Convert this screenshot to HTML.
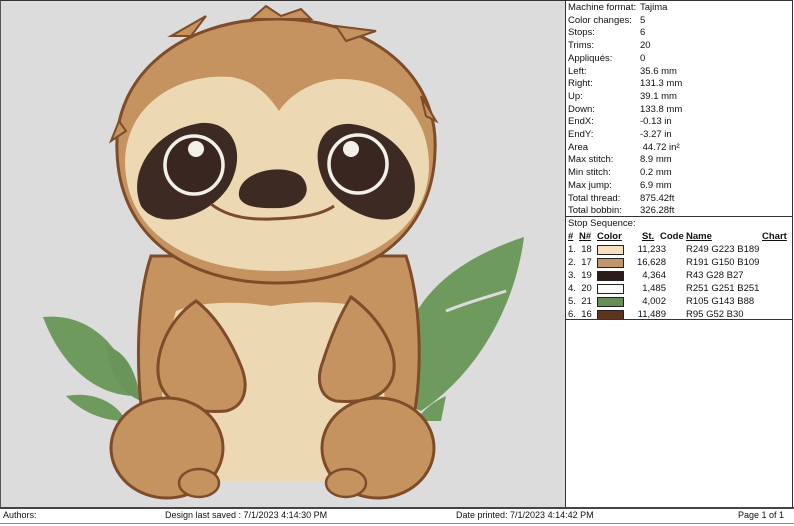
<!DOCTYPE html>
<html><head><style>
body{margin:0;width:794px;height:526px;background:#fff;position:relative;overflow:hidden;font-family:"Liberation Sans",sans-serif;font-size:9.5px;color:#111}
#cv{position:absolute;left:0;top:0;width:564px;height:506px;background:#dcdcdc;border-top:1px solid #333;border-left:1px solid #555}
#pn{position:absolute;left:565px;top:0;width:226px;height:507px;border:1px solid #333;background:#fff}
.r{position:absolute;left:2px;height:13px;line-height:13px;white-space:nowrap}
.r b{font-weight:normal;position:absolute;left:72px}
#sep{position:absolute;left:0;top:215px;width:226px;border-top:1px solid #333}
#sep2{position:absolute;left:0;top:318px;width:226px;border-top:1px solid #333}
.t{position:absolute;height:13px;line-height:13px;white-space:nowrap}
.sw{position:absolute;left:29px;width:25px;height:8px;border:1px solid #222;top:2px}
#bar{position:absolute;left:0;top:507px;width:794px;height:14px;border-top:2px solid #444;border-bottom:1px solid #888;line-height:13px;font-size:9px}
#bar span{position:absolute;top:0}
</style></head><body>
<div id="cv">
<svg width="564" height="506" viewBox="0 0 564 506">
<path d="M398 400 C392 330 420 270 523 236 C515 300 480 370 420 410 Z" fill="#6f9a5e"/>
<path d="M445 310 C470 300 490 295 505 290" stroke="#dcdcdc" stroke-width="3" fill="none"/>
<path d="M415 420 C425 405 435 400 445 395 L440 420Z" fill="#6f9a5e"/>
<path d="M42 316 C85 312 120 340 135 395 C95 395 60 365 42 316 Z" fill="#6f9a5e"/>
<path d="M105 345 C125 350 135 370 140 400 C120 392 108 372 105 345Z" fill="#6a955a"/>
<path d="M65 395 C90 390 115 400 125 420 C100 420 80 410 65 395Z" fill="#6f9a5e"/>
<path d="M150 255 C135 300 135 370 142 420 L412 420 C422 370 420 300 405 255 Z" fill="#c4935f" stroke="#7f4c2a" stroke-width="3"/>
<path d="M175 310 C200 300 240 300 270 305 C300 300 330 300 360 305 C385 360 390 420 380 480 L170 480 C155 420 160 360 175 310Z" fill="#ecd8b3"/>
<path d="M195 300 C165 320 150 360 160 385 C170 408 200 412 225 410 C245 405 248 385 240 365 C230 340 215 315 195 300Z" fill="#c4935f" stroke="#7f4c2a" stroke-width="3"/>
<path d="M350 296 C380 318 398 350 392 375 C385 398 360 402 335 400 C318 396 315 378 322 360 C330 335 340 312 350 296Z" fill="#c4935f" stroke="#7f4c2a" stroke-width="3"/>
<ellipse cx="166" cy="447" rx="56" ry="50" fill="#c4935f" stroke="#7f4c2a" stroke-width="3"/>
<ellipse cx="377" cy="447" rx="56" ry="50" fill="#c4935f" stroke="#7f4c2a" stroke-width="3"/>
<ellipse cx="198" cy="482" rx="20" ry="14" fill="#c4935f" stroke="#7f4c2a" stroke-width="2.5"/>
<ellipse cx="345" cy="482" rx="20" ry="14" fill="#c4935f" stroke="#7f4c2a" stroke-width="2.5"/>
<path d="M116 150 C112 75 180 18 275 18 C372 18 438 75 434 150 C432 235 365 282 275 282 C185 282 118 235 116 150Z" fill="#c4935f" stroke="#7f4c2a" stroke-width="3"/>
<path d="M170 35 L205 15 L190 35 Z M250 18 L265 5 L280 15 L300 8 L310 18Z M335 25 L375 30 L345 40Z M118 120 L110 140 L125 130Z M420 95 L435 120 L425 115Z" fill="#c4935f" stroke="#7f4c2a" stroke-width="2"/>
<path d="M124 160 C125 105 175 72 230 76 C255 80 268 95 278 110 C290 92 315 78 340 78 C395 78 428 115 428 165 C428 225 370 270 275 270 C185 270 124 230 124 160Z" fill="#ecd8b3"/>
<path d="M140 205 C125 170 155 128 200 122 C235 120 245 155 228 185 C210 215 158 232 140 205Z" fill="#3d2a22"/>
<path d="M410 205 C425 170 395 128 350 123 C317 121 308 155 325 185 C345 215 393 232 410 205Z" fill="#3d2a22"/>
<circle cx="193" cy="164" r="29" fill="#3a2620" stroke="#f3f0ea" stroke-width="3.5"/>
<circle cx="357" cy="163" r="29" fill="#3a2620" stroke="#f3f0ea" stroke-width="3.5"/>
<circle cx="195" cy="148" r="8" fill="#f3f0ea"/>
<circle cx="350" cy="148" r="8" fill="#f3f0ea"/>
<path d="M238 195 C235 172 280 160 300 175 C312 188 305 205 280 207 C255 208 240 205 238 195Z" fill="#3d2a22"/>
<path d="M210 203 C225 215 245 219 270 218 C300 217 320 214 333 205" stroke="#7a4a2a" stroke-width="3" fill="none"/>
</svg>
</div>
<div id="pn">
<div class="r" style="top:0">Machine format:<b>Tajima</b></div>
<div class="r" style="top:12.7px">Color changes:<b>5</b></div>
<div class="r" style="top:25.4px">Stops:<b>6</b></div>
<div class="r" style="top:38.1px">Trims:<b>20</b></div>
<div class="r" style="top:50.8px">Appliqués:<b>0</b></div>
<div class="r" style="top:63.5px">Left:<b>35.6 mm</b></div>
<div class="r" style="top:76.2px">Right:<b>131.3 mm</b></div>
<div class="r" style="top:88.9px">Up:<b>39.1 mm</b></div>
<div class="r" style="top:101.6px">Down:<b>133.8 mm</b></div>
<div class="r" style="top:114.3px">EndX:<b>-0.13 in</b></div>
<div class="r" style="top:127px">EndY:<b>-3.27 in</b></div>
<div class="r" style="top:139.7px">Area<b>&nbsp;44.72 in²</b></div>
<div class="r" style="top:152.4px">Max stitch:<b>8.9 mm</b></div>
<div class="r" style="top:165.1px">Min stitch:<b>0.2 mm</b></div>
<div class="r" style="top:177.8px">Max jump:<b>6.9 mm</b></div>
<div class="r" style="top:190.5px">Total thread:<b>875.42ft</b></div>
<div class="r" style="top:203.2px">Total bobbin:<b>326.28ft</b></div>
<div id="sep"></div>
<div class="t" style="left:2px;top:216px">Stop Sequence:</div>
<div class="t" style="left:2px;top:229px;text-decoration:underline;font-weight:bold">#</div>
<div class="t" style="left:13px;top:229px;text-decoration:underline;font-weight:bold">N#</div>
<div class="t" style="left:31px;top:229px;text-decoration:underline;font-weight:bold">Color</div>
<div class="t" style="left:76px;top:229px;text-decoration:underline;font-weight:bold">St.</div>
<div class="t" style="left:94px;top:229px;font-weight:bold">Code</div>
<div class="t" style="left:120px;top:229px;text-decoration:underline;font-weight:bold">Name</div>
<div class="t" style="left:196px;top:229px;text-decoration:underline;font-weight:bold">Chart</div>
<div style="position:absolute;left:0;top:242px;width:226px">
<div class="t" style="top:0;left:2px;width:220px;height:13px"><span style="position:absolute;left:0">1.&nbsp; 18</span><span class="sw" style="background:#f9dfbd"></span><span style="position:absolute;right:122px">11,233</span><span style="position:absolute;left:118px">R249 G223 B189</span></div>
<div class="t" style="top:13px;left:2px;width:220px;height:13px"><span style="position:absolute;left:0">2.&nbsp; 17</span><span class="sw" style="background:#bf966d"></span><span style="position:absolute;right:122px">16,628</span><span style="position:absolute;left:118px">R191 G150 B109</span></div>
<div class="t" style="top:26px;left:2px;width:220px;height:13px"><span style="position:absolute;left:0">3.&nbsp; 19</span><span class="sw" style="background:#2b1c1b"></span><span style="position:absolute;right:122px">4,364</span><span style="position:absolute;left:118px">R43 G28 B27</span></div>
<div class="t" style="top:39px;left:2px;width:220px;height:13px"><span style="position:absolute;left:0">4.&nbsp; 20</span><span class="sw" style="background:#fbfbfb"></span><span style="position:absolute;right:122px">1,485</span><span style="position:absolute;left:118px">R251 G251 B251</span></div>
<div class="t" style="top:52px;left:2px;width:220px;height:13px"><span style="position:absolute;left:0">5.&nbsp; 21</span><span class="sw" style="background:#698f58"></span><span style="position:absolute;right:122px">4,002</span><span style="position:absolute;left:118px">R105 G143 B88</span></div>
<div class="t" style="top:65px;left:2px;width:220px;height:13px"><span style="position:absolute;left:0">6.&nbsp; 16</span><span class="sw" style="background:#5f341e"></span><span style="position:absolute;right:122px">11,489</span><span style="position:absolute;left:118px">R95 G52 B30</span></div>
</div>
<div id="sep2"></div>
</div>
<div id="bar">
<span style="left:3px">Authors:</span>
<span style="left:165px">Design last saved : 7/1/2023 4:14:30 PM</span>
<span style="left:456px">Date printed: 7/1/2023 4:14:42 PM</span>
<span style="left:738px">Page 1 of 1</span>
</div>
</body></html>
